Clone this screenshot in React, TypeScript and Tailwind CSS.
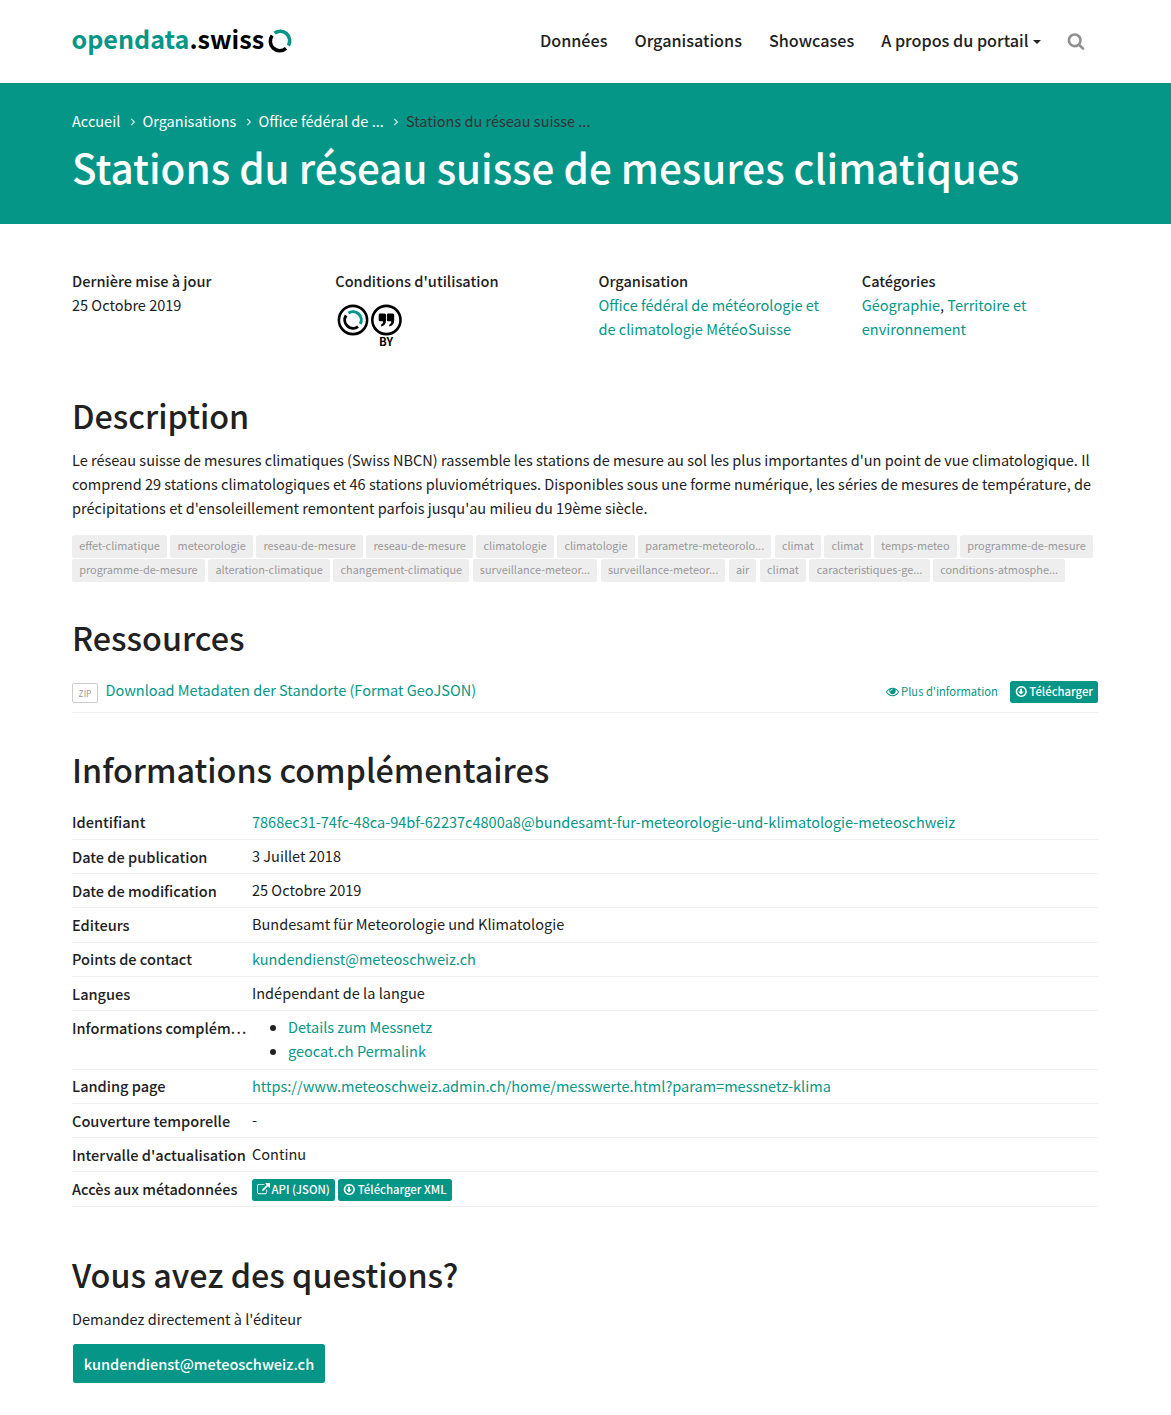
import React from "react";

const TEAL = "text-[#059688]";

function FaIcon({ d, className }: { d: string; className: string }) {
  return (
    <svg viewBox="0 0 1792 1792" className={className} fill="currentColor">
      <path d={d} />
    </svg>
  );
}

const SEARCH =
  "M1216 832q0-185-131.5-316.5t-316.5-131.5-316.5 131.5-131.5 316.5 131.5 316.5 316.5 131.5 316.5-131.5 131.5-316.5zm512 832q0 52-38 90t-90 38q-54 0-90-38l-343-342q-179 124-399 124-143 0-273.5-55.5t-225-150-150-225-55.5-273.5 55.5-273.5 150-225 225-150 273.5-55.5 273.5 55.5 225 150 150 225 55.5 273.5q0 220-124 399l343 343q37 37 37 90z";
const EYE =
  "M1664 960q-152-236-381-353 61 104 61 225 0 185-131.5 316.5t-316.5 131.5-316.5-131.5-131.5-316.5q0-121 61-225-229 117-381 353 133 205 333.5 326.5t434.5 121.5 434.5-121.5 333.5-326.5zm-720-384q0-20-14-34t-34-14q-125 0-214.5 89.5t-89.5 214.5q0 20 14 34t34 14 34-14 14-34q0-86 61-147t147-61q20 0 34-14t14-34zm848 384q0 34-20 69-140 230-376.5 368.5t-499.5 138.5-499.5-139-376.5-368q-20-35-20-69t20-69q140-229 376.5-368t499.5-139 499.5 139 376.5 368q20 35 20 69z";
const EXTERNAL =
  "M1408 928v320q0 119-84.5 203.5t-203.5 84.5h-832q-119 0-203.5-84.5t-84.5-203.5v-832q0-119 84.5-203.5t203.5-84.5h704q14 0 23 9t9 23v64q0 14-9 23t-23 9h-704q-66 0-113 47t-47 113v832q0 66 47 113t113 47h832q66 0 113-47t47-113v-320q0-14 9-23t23-9h64q14 0 23 9t9 23zm384-864v512q0 26-19 45t-45 19-45-19l-176-176-652 652q-10 10-23 10t-23-10l-114-114q-10-10-10-23t10-23l652-652-176-176q-19-19-19-45t19-45 45-19h512q26 0 45 19t19 45z";
const DOWNLOAD =
  "M1184 928q0 14-10 24l-319 319q-10 9-23 9t-23-9l-320-320q-9-9-9-23 0-13 9.500-22.500t22.500-9.500h192v-352q0-13 9.500-22.500t22.500-9.500h192q13 0 22.500 9.500t9.500 22.500v352h192q14 0 23 9t9 23zm-320-576q-148 0-273 73t-198 198-73 273 73 273 198 198 273 73 273-73 198-198 73-273-73-273-198-198-273-73zm768 544q0 209-103 385.500t-279.500 279.500-385.500 103-385.500-103-279.500-279.500-103-385.500 103-385.500 279.500-279.500 385.500-103 385.500 103 279.500 279.500 103 385.500z";

function Ring({ className }: { className: string }) {
  return (
    <svg viewBox="0 0 24 24" className={className} fill="none" strokeWidth="3.6">
      <path d="M6.500 4.100 A9.500 9.500 0 0 1 20.400 16.500" stroke="#059688" />
      <path d="M18 19.400 A9.500 9.500 0 0 1 4.200 6.500" stroke="#000" />
    </svg>
  );
}

function LicenseIcon() {
  return (
    <svg viewBox="0 0 66 44" className="mt-[11px] ml-[2px] h-[44px] w-[66px]" fill="none">
      <circle cx="16" cy="16" r="14.100" stroke="#000" strokeWidth="2.600" />
      <path d="M11.400 9.100 A8.300 8.300 0 0 1 23.200 20.100" stroke="#059688" strokeWidth="3" />
      <path d="M21 22.600 A8.300 8.300 0 0 1 9.100 11.400" stroke="#000" strokeWidth="3" />
      <circle cx="49.400" cy="16" r="14.100" stroke="#000" strokeWidth="2.600" />
      <path
        d="M43 9.600h4.500q1.500 0 1.500 1.500v5.200c0 3.800-1.700 5.700-4.900 6.300v-2.200c1.500-.4 2-1.500 2-3.200h-3.100q-1.300 0-1.300-1.300v-5q0-1.300 1.300-1.300z M51.200 9.600h4.500q1.500 0 1.500 1.500v5.200c0 3.800-1.700 5.700-4.900 6.300v-2.200c1.500-.4 2-1.500 2-3.200h-3.100q-1.300 0-1.300-1.300v-5q0-1.300 1.300-1.300z"
        fill="#000"
      />
      <text x="49" y="41.600" textAnchor="middle" fontSize="11.300" fontWeight="700" fill="#000">
        BY
      </text>
    </svg>
  );
}

function Sep() {
  return (
    <div className="flex w-[22.200px] justify-center pl-[3px]">
      <svg viewBox="0 0 6 8" className="mt-[3px] h-2 w-1.5" fill="none" stroke="#fff" strokeOpacity="0.8" strokeWidth="1.200">
        <path d="M1.200 .8 L4.400 4 L1.200 7.200" />
      </svg>
    </div>
  );
}

const TAGS = [
  ["effet-climatique", "meteorologie", "reseau-de-mesure", "reseau-de-mesure", "climatologie", "climatologie", "parametre-meteorolo...", "climat", "climat", "temps-meteo", "programme-de-mesure"],
  ["programme-de-mesure", "alteration-climatique", "changement-climatique", "surveillance-meteor...", "surveillance-meteor...", "air", "climat", "caracteristiques-ge...", "conditions-atmosphe..."],
];

function H2({ children, className }: { children: React.ReactNode; className: string }) {
  return <h2 className={`text-[32.300px] leading-[40px] font-medium ${className}`}>{children}</h2>;
}

function Row({ label, children }: { label: React.ReactNode; children: React.ReactNode }) {
  return (
    <div className="flex border-b border-[#eeeeee] pt-[4px] pb-[4.250px]">
      <dt className="w-[180px] shrink-0 pt-[0.700px] text-[14.570px] font-medium leading-[24.300px] whitespace-nowrap">
        {label}
      </dt>
      <dd className="pb-[0.700px] leading-[24.300px]">{children}</dd>
    </div>
  );
}

function Btn({ icon, children }: { icon: string; children: React.ReactNode }) {
  return (
    <a className="flex h-[22px] items-center gap-[1.500px] rounded-[2.500px] bg-[#059688] px-[5px] text-[11.350px] font-medium text-white">
      <FaIcon d={icon} className="h-[13px] w-[13px]" />
      <span className="-mt-px">{children}</span>
    </a>
  );
}

export default function App() {
  return (
    <main className="h-[1415px] overflow-hidden bg-white font-['Noto_Sans_CJK_SC',sans-serif] text-[14.520px] text-[#212121]">
      <header className="flex h-[83px] items-center px-[72px]">
        <a className="-mt-[3px] -ml-[0.500px] flex items-center text-[25.100px] leading-none font-bold text-black">
          <span className={`-mt-[2px] ${TEAL}`}>opendata</span>
          <span className="-mt-[2px]">.swiss</span>
          <Ring className="mt-px ml-[3.500px] h-6 w-6" />
        </a>
        <nav className="-mt-[2px] ml-auto flex items-center gap-[27px] pr-[14px] text-[16.200px] font-medium">
          <span>Données</span>
          <span>Organisations</span>
          <span>Showcases</span>
          <div className="-mr-px flex items-center">
            <span>A propos du portail</span>
            <i className="mt-[3px] ml-[4.500px] border-x-[4px] border-t-[4px] border-x-transparent border-t-[#212121]" />
          </div>
          <FaIcon d={SEARCH} className="mt-px h-[18px] w-[18px] text-[#909090]" />
        </nav>
      </header>
      <section className="h-[141px] bg-[#059688] px-[72px] pt-[25px] text-white">
        <div className="flex h-[25px] items-center">
          <span>Accueil</span>
          <Sep />
          <span>Organisations</span>
          <Sep />
          <span>Office fédéral de ...</span>
          <Sep />
          <span className="text-[#333]">Stations du réseau suisse ...</span>
        </div>
        <h1 className="mt-[9px] text-[40.400px] leading-[50px] font-medium whitespace-nowrap">Stations du réseau suisse de mesures climatiques</h1>
      </section>
      <div className="px-[72px]">
        <div className="mt-[45px] grid h-[119px] w-[1053px] grid-cols-4 leading-[24px]">
          <div>
            <h4 className="text-[14.570px] font-medium">Dernière mise à jour</h4>
            <span>25 Octobre 2019</span>
          </div>
          <div>
            <h4 className="text-[14.570px] font-medium">Conditions d'utilisation</h4>
            <LicenseIcon />
          </div>
          <div>
            <h4 className="text-[14.570px] font-medium">Organisation</h4>
            <a className={TEAL}>
              Office fédéral de météorologie et
              <br />
              de climatologie MétéoSuisse
            </a>
          </div>
          <div>
            <h4 className="text-[14.570px] font-medium">Catégories</h4>
            <a className={TEAL}>Géographie</a>, <a className={TEAL}>Territoire et<br />environnement</a>
          </div>
        </div>
        <H2 className="mt-[7px]">Description</H2>
        <p className="mt-[12.600px] leading-[24.300px] whitespace-nowrap">
          Le réseau suisse de mesures climatiques (Swiss NBCN) rassemble les stations de mesure au sol les plus importantes d'un point de vue climatologique. Il
          <br />
          comprend 29 stations climatologiques et 46 stations pluviométriques. Disponibles sous une forme numérique, les séries de mesures de température, de
          <br />
          précipitations et d'ensoleillement remontent parfois jusqu'au milieu du 19ème siècle.
        </p>
        <div className="mt-[14.400px] flex flex-col gap-[1.700px]">
          {TAGS.map((row, i) => (
            <div key={i} className="flex gap-[3.400px]">
              {row.map((t, j) => (
                <a key={j} className="h-[22.700px] rounded-[2.500px] bg-[#eeeeee] px-[7.200px] text-[10.900px] leading-[21px] text-[#999]">
                  {t}
                </a>
              ))}
            </div>
          ))}
        </div>
        <H2 className="mt-[35px]">Ressources</H2>
        <div className="mt-[21px] flex h-[35px] w-[1026px] items-start border-b border-[#eeeeee]">
          <i className="mt-[5px] flex h-[20px] w-[26px] items-center justify-center rounded-[2px] border border-[#ccc] text-[8.400px] text-[#999] not-italic">ZIP</i>
          <a className={`ml-[7.500px] leading-[24px] ${TEAL}`}>Download Metadaten der Standorte (Format GeoJSON)</a>
          <a className={`mt-[3px] mr-[12px] ml-auto flex h-[22px] items-center gap-[2px] text-[11.200px] ${TEAL}`}>
            <FaIcon d={EYE} className="h-[13px] w-[13px]" />
            <span className="-mt-px">Plus d'information</span>
          </a>
          <div className="mt-[3px]"><Btn icon={DOWNLOAD}>Télécharger</Btn></div>
        </div>
        <H2 className="mt-[36px]">Informations complémentaires</H2>
        <dl className="mt-[16.800px] w-[1026px]">
          <Row label="Identifiant"><a className={TEAL}>7868ec31-74fc-48ca-94bf-62237c4800a8@bundesamt-fur-meteorologie-und-klimatologie-meteoschweiz</a></Row>
          <Row label="Date de publication">3 Juillet 2018</Row>
          <Row label="Date de modification">25 Octobre 2019</Row>
          <Row label="Editeurs">Bundesamt für Meteorologie und Klimatologie</Row>
          <Row label="Points de contact"><a className={TEAL}>kundendienst@meteoschweiz.ch</a></Row>
          <Row label="Langues">Indépendant de la langue</Row>
          <Row label={<>Informations complém<span className="tracking-[1.200px]">...</span></>}>
            <ul className="list-disc pl-[36px]">
              <li><a className={TEAL}>Details zum Messnetz</a></li>
              <li><a className={TEAL}>geocat.ch Permalink</a></li>
            </ul>
          </Row>
          <Row label="Landing page"><a className={TEAL}>https://www.meteoschweiz.admin.ch/home/messwerte.html?param=messnetz-klima</a></Row>
          <Row label="Couverture temporelle">-</Row>
          <Row label="Intervalle d'actualisation">Continu</Row>
          <Row label="Accès aux métadonnées">
            <div className="flex gap-[3.500px] pt-[2.300px]">
              <Btn icon={EXTERNAL}>API (JSON)</Btn>
              <Btn icon={DOWNLOAD}>Télécharger XML</Btn>
            </div>
          </Row>
        </dl>
        <H2 className="mt-[47.600px]">Vous avez des questions?</H2>
        <p className="mt-[12.500px] leading-[24.300px]">Demandez directement à l'éditeur</p>
        <a className="mt-[13px] ml-[1px] flex h-[39px] w-[252px] items-center justify-center rounded-[2.500px] bg-[#059688] text-[14.570px] font-medium text-white">kundendienst@meteoschweiz.ch</a>
      </div>
    </main>
  );
}
